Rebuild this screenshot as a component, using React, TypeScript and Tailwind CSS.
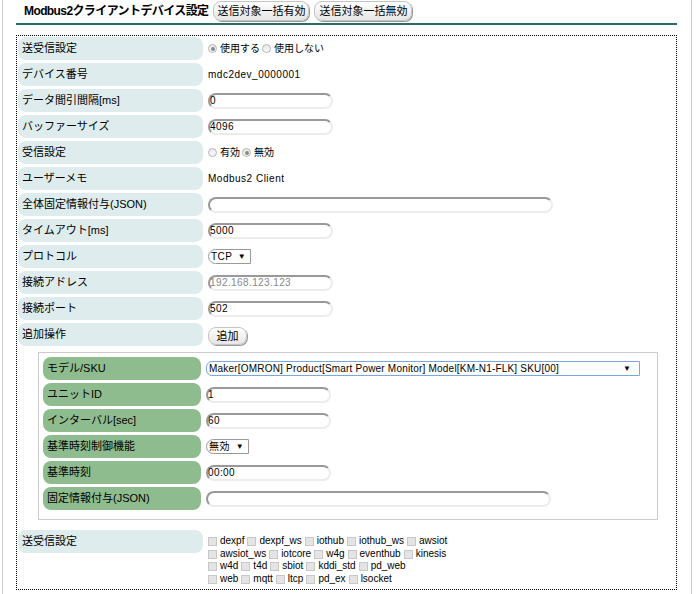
import React from 'react';

const font = { fontFamily: '"Liberation Sans", "Noto Sans CJK JP", sans-serif' };

const Radio = ({ checked }: { checked?: boolean }) => (
  <span className="inline-flex items-center justify-center w-[9px] h-[9px] rounded-full border border-[#b5b5b5] bg-gradient-to-b from-[#e8e8e8] to-[#fafafa] mr-[3px]">
    {checked && <span className="w-[4px] h-[4px] rounded-full bg-[#8a8a8a]" />}
  </span>
);

const Check = () => (
  <span className="inline-block w-[9px] h-[9px] border border-[#c8c8c8] bg-[#e4e4e4] mr-[3px] align-middle" />
);

const TextBox = ({ value, wide, gray }: { value: string; wide?: boolean; gray?: boolean }) => (
  <div
    className={`${wide ? 'w-[345px]' : 'w-[125px]'} h-[16px] rounded-full border-t-2 border-l-2 border-t-[#999] border-l-[#999] border-b-2 border-r-2 border-b-[#ececec] border-r-[#ececec] flex items-center pt-[1px] text-[10px] tracking-[0.4px] leading-none ${gray ? 'text-[#888]' : 'text-black'}`}
  >
    {value}
  </div>
);

const Select = ({ value, className }: { value: string; className?: string }) => (
  <div className={`h-[15px] flex items-center justify-between border border-[#999] rounded-l-full pl-[2px] pr-[4px] text-[10px] tracking-[0.4px] leading-none bg-white ${className ?? ''}`}>
    <span>{value}</span>
    <span className="text-[8px] ml-[4px]">▼</span>
  </div>
);

const PillButton = ({ children, className }: { children: React.ReactNode; className?: string }) => (
  <button className={`rounded-[8px] border border-[#c4c4c4] bg-gradient-to-b from-white to-[#e6e6e6] shadow-[1px_1px_0_#9a9a9a] text-[11px] leading-none text-black ${className ?? ''}`}>
    {children}
  </button>
);

const Row = ({ label, children }: { label: string; children?: React.ReactNode }) => (
  <div className="flex h-[23px] items-center">
    <div className="w-[185px] h-full rounded-[8px] bg-[#deeced] flex items-center pl-[4px] text-[11px]">{label}</div>
    <div className="pl-[5px] flex items-center text-[10px]">{children}</div>
  </div>
);

const GreenRow = ({ label, children }: { label: string; children?: React.ReactNode }) => (
  <div className="flex h-[23px] items-center">
    <div className="w-[158px] h-full rounded-[8px] bg-[#8fbc8f] flex items-center pl-[4px] text-[11px]">{label}</div>
    <div className="pl-[5px] flex items-center text-[10px]">{children}</div>
  </div>
);

const checkLines = [
  ['dexpf', 'dexpf_ws', 'iothub', 'iothub_ws', 'awsiot'],
  ['awsiot_ws', 'iotcore', 'w4g', 'eventhub', 'kinesis'],
  ['w4d', 't4d', 'sbiot', 'kddi_std', 'pd_web'],
  ['web', 'mqtt', 'ltcp', 'pd_ex', 'lsocket'],
];

export default function App() {
  return (
    <div className="w-[698px] h-[594px] bg-white overflow-hidden text-black" style={font}>
      <div className="ml-[2px] w-[690px] h-full border-l border-r border-[#cccccc]">
        <div className="ml-[13px] w-[661px]">
          <div className="flex items-center h-[25px] pb-[1px] border-b-2 border-[#2a6b66]">
            <h1 className="font-bold text-[12px] ml-[8px] tracking-[-0.6px]">Modbus2クライアントデバイス設定</h1>
            <PillButton className="ml-[5px] w-[96px] h-[20px]">送信対象一括有効</PillButton>
            <PillButton className="ml-[5px] w-[98px] h-[20px]">送信対象一括無効</PillButton>
          </div>
          <div className="mt-[10px] border border-dotted border-black h-[555px] pl-[1px] pt-[1px]">
            <div className="flex flex-col gap-[3px]">
              <Row label="送受信設定">
                <Radio checked /><span className="mr-[2px]">使用する</span>
                <Radio /><span>使用しない</span>
              </Row>
              <Row label="デバイス番号"><span className="tracking-[0.5px]">mdc2dev_0000001</span></Row>
              <Row label="データ間引間隔[ms]"><TextBox value="0" /></Row>
              <Row label="バッファーサイズ"><TextBox value="4096" /></Row>
              <Row label="受信設定">
                <Radio /><span className="mr-[2px]">有効</span>
                <Radio checked /><span>無効</span>
              </Row>
              <Row label="ユーザーメモ"><span className="tracking-[0.5px]">Modbus2 Client</span></Row>
              <Row label="全体固定情報付与(JSON)"><TextBox value="" wide /></Row>
              <Row label="タイムアウト[ms]"><TextBox value="5000" /></Row>
              <Row label="プロトコル"><Select value="TCP" className="w-[43px]" /></Row>
              <Row label="接続アドレス"><TextBox value="192.168.123.123" gray /></Row>
              <Row label="接続ポート"><TextBox value="502" /></Row>
              <Row label="追加操作">
                <PillButton className="w-[39px] h-[18px] mt-[3px]">追加</PillButton>
              </Row>
            </div>
            <div className="mt-[6px] ml-[20px] w-[620px] border border-[#cccccc] pl-[4px] pt-[4px] pb-[9px] flex flex-col gap-[3px]">
              <GreenRow label="モデル/SKU">
                <div className="w-[434px] h-[15px] flex items-center justify-between border border-[#7ba6df] rounded-l-[6px] pl-[2px] pr-[8px] text-[10px] tracking-[0.2px] leading-none">
                  <span>Maker[OMRON] Product[Smart Power Monitor] Model[KM-N1-FLK] SKU[00]</span>
                  <span className="text-[8px]">▼</span>
                </div>
              </GreenRow>
              <GreenRow label="ユニットID"><TextBox value="1" /></GreenRow>
              <GreenRow label="インターバル[sec]"><TextBox value="60" /></GreenRow>
              <GreenRow label="基準時刻制御機能"><Select value="無効" className="w-[43px]" /></GreenRow>
              <GreenRow label="基準時刻"><TextBox value="00:00" /></GreenRow>
              <GreenRow label="固定情報付与(JSON)"><TextBox value="" wide /></GreenRow>
            </div>
            <div className="mt-[10px] flex items-start">
              <div className="w-[185px] h-[23px] rounded-[8px] bg-[#deeced] flex items-center pl-[4px] text-[11px]">送受信設定</div>
              <div className="pl-[5px] pt-[5px] flex flex-col text-[10px] leading-[12.7px]">
                {checkLines.map((line, i) => (
                  <div key={i} className="flex items-center">
                    {line.map((name) => (
                      <span key={name} className="flex items-center mr-[3px]">
                        <Check />
                        {name}
                      </span>
                    ))}
                  </div>
                ))}
              </div>
            </div>
          </div>
        </div>
      </div>
    </div>
  );
}
